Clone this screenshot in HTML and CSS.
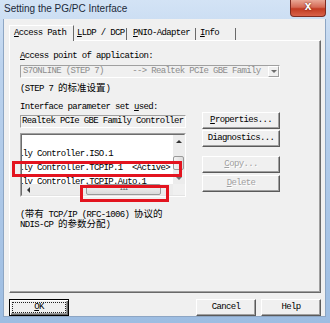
FILE: index.html
```html
<!DOCTYPE html>
<html>
<head>
  <title>Setting the PG/PC Interface</title>
  <link rel="stylesheet" href="styles.css">
</head>
<body>
  <div class="window">
    <div class="titlebar">
      <span class="title">Setting the PG/PC Interface</span>
      <div class="close">x</div>
    </div>
    <div class="client">
      <div class="tabs">
        <div class="tab active t1"><u>A</u>ccess Path</div>
        <div class="tab t2"><u>L</u>LDP / DCP</div>
        <div class="tab t3"><u>P</u>NIO-Adapter</div>
        <div class="tab t4"><u>I</u>nfo</div>
      </div>
      <div class="panel">
        <div class="label"><u>A</u>ccess point of application:</div>
        <div class="combo">
          <span class="combo-text">S7ONLINE (STEP 7)      --&gt; Realtek PCIe GBE Family</span>
          <span class="combo-arrow"><i class="tri down"></i></span>
        </div>
        <div class="label note">(STEP 7 <span class="cjk">的标准设置</span>)</div>
        <div class="label label2">Interface parameter set <u>u</u>sed:</div>
        <div class="row">
          <div class="left">
            <div class="field">Realtek PCIe GBE Family Controller</div>
            <div class="listbox">
              <div class="listbox-inner">
                <div class="items">
                  <div class="item"><span class="item-text">Realtek PCIe GBE Family Controller.ISO.1</span></div>
                  <div class="item"><span class="item-text">Realtek PCIe GBE Family Controller.TCPIP.1  &lt;Active&gt;</span></div>
                  <div class="item"><span class="item-text">Realtek PCIe GBE Family Controller.TCPIP.Auto.1</span></div>
                </div>
                <div class="vscroll">
                  <div class="arrow"><i class="tri up"></i></div>
                  <div class="vtrack"><div class="vthumb"></div></div>
                  <div class="arrow"><i class="tri down"></i></div>
                </div>
                <div class="hscroll">
                  <div class="arrow"><i class="tri left-tri"></i></div>
                  <div class="htrack"><div class="hthumb">III</div></div>
                  <div class="arrow"><i class="tri right-tri"></i></div>
                </div>
                <div class="corner"></div>
              </div>
            </div>
          </div>
          <div class="right">
            <div class="btn btn-prop"><u>P</u>roperties...</div>
            <div class="btn btn-diag">Dia<u>g</u>nostics...</div>
            <div class="btn disabled btn-copy"><u>C</u>opy...</div>
            <div class="btn disabled btn-del"><u>D</u>elete</div>
          </div>
        </div>
        <div class="label desc">(<span class="cjk">带有</span> TCP/IP (RFC-1006) <span class="cjk">协议的</span></div>
        <div class="label desc2">NDIS-CP <span class="cjk">的参数分配</span>)</div>
      </div>
      <div class="footer">
        <div class="btn wide default"><span class="focus"><u>O</u>K</span></div>
        <div class="btn wide cancel">Cancel</div>
        <div class="btn wide">Help</div>
      </div>
    </div>
    <div class="mark mark-row"></div>
    <div class="mark mark-scroll"></div>
  </div>
</body>
</html>
```

FILE: styles.css
```css
body {
  margin: 0;
  background: #fff;
}

.window {
  position: relative;
  width: 330px;
  height: 323px;
  overflow: hidden;
  background: linear-gradient(to bottom, #d3e3f5, #bcd3ee 20%, #a9c5e6 70%, #9dbde2);
  font-family: "Liberation Mono", "Noto Sans CJK SC", monospace;
  font-size: 9px;
  letter-spacing: -0.65px;
  color: #000;
}

.titlebar {
  display: flex;
  height: 19px;
}

.title {
  font-family: "Liberation Sans", Arial, sans-serif;
  font-size: 10px;
  letter-spacing: 0;
  color: #1b2a3a;
  margin: 3px 0 0 4px;
}

.close {
  margin-left: auto;
  margin-right: 4px;
  width: 36px;
  height: 17px;
  box-sizing: border-box;
  border: 1px solid #7e2c22;
  border-top: none;
  border-radius: 0 0 4px 4px;
  background: linear-gradient(to bottom, #e9a795, #d56a55 45%, #c23b22 55%, #d8624a);
  color: #fff;
  font-family: "Liberation Sans", Arial, sans-serif;
  font-weight: bold;
  font-size: 12px;
  letter-spacing: 0;
  text-align: center;
  line-height: 13px;
  text-shadow: 0 0 2px #5a1208;
}

.client {
  box-sizing: border-box;
  height: 298px;
  margin: 0 4px 0 3px;
  padding: 6px 4px 0 5px;
  background: #f0f0f0;
  border: 1px solid #8da6c4;
  border-top: none;
}

.tabs {
  display: flex;
  height: 15px;
  align-items: flex-end;
}

.tab {
  box-sizing: border-box;
  height: 12px;
  line-height: 11px;
  border-right: 1px solid #696969;
}

.tab.active {
  position: relative;
  z-index: 1;
  height: 16px;
  margin-bottom: -1px;
  line-height: 15px;
  background: #f0f0f0;
  border-top: 1px solid #fff;
  border-left: 1px solid #fff;
}

.t1 { width: 65px; padding-left: 4px; }
.t2 { width: 53px; padding-left: 3px; }
.t3 { width: 69px; padding-left: 6px; }
.t4 { width: 40px; padding-left: 4px; }

.panel {
  box-sizing: border-box;
  height: 253px;
  padding: 10px 0 0 10px;
  border-top: 1px solid #fff;
  border-left: 1px solid #fff;
  border-right: 1px solid #696969;
  border-bottom: 1px solid #696969;
  box-shadow: inset -1px -1px #a0a0a0;
}

.label {
  height: 10px;
  line-height: 10px;
  white-space: pre;
}

.cjk {
  font-family: "Noto Sans CJK SC", sans-serif;
  font-size: 9.5px;
  letter-spacing: 0;
}

.combo {
  display: flex;
  box-sizing: border-box;
  width: 260px;
  height: 13px;
  margin-top: 4px;
  border: 1px solid;
  border-color: #a0a0a0 #fff #fff #a0a0a0;
  background: #f0f0f0;
}

.combo-text {
  flex: 1;
  padding-left: 2px;
  line-height: 11px;
  color: #8d8d8d;
  white-space: pre;
}

.combo-arrow {
  display: flex;
  align-items: center;
  justify-content: center;
  box-sizing: border-box;
  width: 11px;
  height: 11px;
  border: 1px solid;
  border-color: #fff #a0a0a0 #a0a0a0 #fff;
}

.tri {
  display: block;
  width: 0;
  height: 0;
  border: 3px solid transparent;
}

.tri.down { border-top-color: #6d6d6d; border-bottom-width: 0; }
.tri.up { border-bottom-color: #333; border-top-width: 0; }
.tri.left-tri { border-right-color: #333; border-left-width: 0; }
.tri.right-tri { border-left-color: #333; border-right-width: 0; }

.note {
  margin-top: 4px;
}

.label2 {
  margin-top: 10px;
}

.row {
  display: flex;
}

.left {
  width: 166px;
}

.field {
  box-sizing: border-box;
  height: 13px;
  margin-top: 3px;
  padding-left: 1px;
  line-height: 11px;
  border: 1px solid;
  border-color: #a0a0a0 #fff #fff #a0a0a0;
  background: #f0f0f0;
  white-space: pre;
}

.listbox {
  box-sizing: border-box;
  height: 64px;
  margin-top: 5px;
  border: 1px solid;
  border-color: #a0a0a0 #fff #fff #a0a0a0;
}

.listbox-inner {
  display: grid;
  grid-template-columns: 1fr 12px;
  grid-template-rows: 1fr 11px;
  height: 100%;
  box-sizing: border-box;
  border: 1px solid;
  border-color: #6d6d6d #e3e3e3 #e3e3e3 #6d6d6d;
  background: #fff;
}

.items {
  overflow: hidden;
  padding-top: 12px;
}

.item {
  height: 14px;
  line-height: 14px;
  white-space: pre;
}

.item-text {
  margin-left: -99px;
}

.vscroll {
  display: flex;
  flex-direction: column;
  background: #ececec;
}

.arrow {
  display: flex;
  align-items: center;
  justify-content: center;
  width: 12px;
  height: 12px;
  flex: none;
}

.hscroll .arrow {
  width: 12px;
  height: 11px;
}

.vtrack {
  flex: 1;
}

.vthumb {
  box-sizing: border-box;
  width: 11px;
  height: 14px;
  margin: 9px 0 0 0;
  border: 1px solid #9a9a9a;
  border-radius: 2px;
  background: linear-gradient(to right, #f4f4f4, #dcdcdc);
}

.hscroll {
  display: flex;
  background: #ececec;
}

.htrack {
  flex: 1;
}

.hthumb {
  box-sizing: border-box;
  width: 75px;
  height: 11px;
  margin-left: 52px;
  border: 1px solid #9a9a9a;
  border-radius: 2px;
  background: linear-gradient(to bottom, #f6f6f6, #dadada);
  font-size: 6px;
  letter-spacing: -1px;
  line-height: 8px;
  text-align: center;
  color: #555;
}

.corner {
  background: #f0f0f0;
}

.right {
  margin-left: 16px;
}

.btn {
  box-sizing: border-box;
  width: 78px;
  height: 17px;
  border: 1px solid;
  border-color: #fff #5a5a5a #5a5a5a #fff;
  box-shadow: inset -1px -1px #a0a0a0;
  background: #f0f0f0;
  text-align: center;
  line-height: 14px;
  white-space: pre;
}

.btn.disabled {
  color: #a0a0a0;
  text-shadow: 1px 1px #fff;
}

.btn-prop { margin-top: 0; }
.btn-diag { margin-top: 1px; }
.btn-copy { margin-top: 9px; }
.btn-del { margin-top: 2px; }

.desc {
  margin-top: 11px;
}

.footer {
  display: flex;
  margin-top: 6px;
}

.btn.wide {
  width: 60px;
}

.btn.default {
  border: 1px solid #000;
  box-shadow: inset 1px 1px #fff, inset -1px -1px #696969, inset -2px -2px #a0a0a0;
  padding: 2px;
  line-height: 9px;
}

.focus {
  display: block;
  height: 9px;
  border: 1px dotted #222;
}

.cancel {
  margin-left: auto;
  margin-right: 5px;
}

.mark {
  position: absolute;
  box-sizing: border-box;
  border: 3px solid #e3141f;
}

.mark-row {
  left: 12px;
  top: 161px;
  width: 170px;
  height: 16px;
}

.mark-scroll {
  left: 80px;
  top: 185px;
  width: 89px;
  height: 17px;
}
```
